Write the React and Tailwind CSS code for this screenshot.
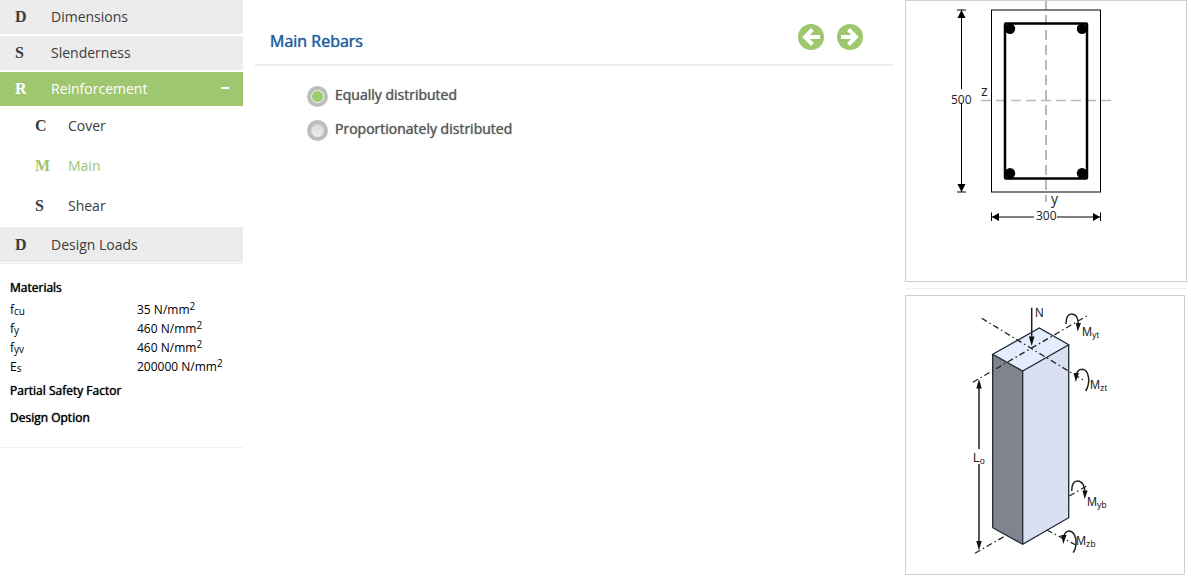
import React, { useState } from "react";

const SubItem = ({ letter, label, active, onClick }) => (
  <a
    href="#"
    onClick={onClick}
    className={`flex h-10 items-center pl-[35px] text-sm ${active ? "text-[#9dc66d]" : "text-[#3c3c3c]"}`}
  >
    <span className="w-[33px] font-['Liberation_Serif',serif] text-base font-bold">{letter}</span>
    {label}
  </a>
);

const NavItem = ({ letter, label, active }) => (
  <a
    href="#"
    className={`flex h-[34px] items-center pr-[14px] pl-[15px] text-sm ${
      active ? "bg-[#9fc76f] text-white" : "bg-[#ececec] text-[#3c3c3c]"
    }`}
  >
    <span className="w-9 font-['Liberation_Serif',serif] text-base font-bold">{letter}</span>
    <span className="flex-1">{label}</span>
    {active && <span className="mb-[2px] h-[2px] w-[8px] bg-white" />}
  </a>
);

const Heading = ({ children }) => (
  <h3 className="h-5 leading-5 [text-shadow:0_0_1px_currentColor]">{children}</h3>
);

const materials = [
  { name: "f", sub: "cu", value: "35" },
  { name: "f", sub: "y", value: "460" },
  { name: "f", sub: "yv", value: "460" },
  { name: "E", sub: "s", value: "200000" },
];

const Sidebar = () => {
  const [current, setCurrent] = useState("Main");
  const subItems = ["Cover", "Main", "Shear"];

  return (
    <aside className="w-[243px] shrink-0">
      <nav className="border-b border-[#ececec] pb-px">
        <div className="flex flex-col gap-[2px]">
          <NavItem letter="D" label="Dimensions" />
          <NavItem letter="S" label="Slenderness" />
          <NavItem letter="R" label="Reinforcement" active />
        </div>
        {subItems.map((item) => (
          <SubItem
            key={item}
            letter={item[0]}
            label={item}
            active={item === current}
            onClick={() => setCurrent(item)}
          />
        ))}
        <div className="mt-px bg-[#ececec] pt-px">
          <NavItem letter="D" label="Design Loads" />
        </div>
      </nav>

      <section className="border-b border-[#efefef] px-[10px] pt-[14px] pb-[19px] text-xs text-black">
        <Heading>Materials</Heading>
        <table className="mt-[2px] mb-[5px] w-full">
          <tbody>
            {materials.map((m) => (
              <tr key={m.name + m.sub} className="h-[19px]">
                <th scope="row" className="w-[127px] p-0 text-left font-normal">
                  {m.name}
                  <sub className="-bottom-px text-[10px]">{m.sub}</sub>
                </th>
                <td className="p-0 whitespace-nowrap">
                  {m.value} N/mm<sup className="-top-1 text-[10px]">2</sup>
                </td>
              </tr>
            ))}
          </tbody>
        </table>
        <div className="flex flex-col gap-[7px]">
          <Heading>Partial Safety Factor</Heading>
          <Heading>Design Option</Heading>
        </div>
      </section>
    </aside>
  );
};

const RoundButton = ({ label, path }) => (
  <button type="button" aria-label={label} className="size-[26px] cursor-pointer">
    <svg viewBox="0 0 26 26" className="size-full">
      <circle cx="13" cy="13" r="13" fill="#9cc76c" />
      <path d={path} fill="none" stroke="#fff" strokeWidth="4" />
    </svg>
  </button>
);

const RadioOption = ({ value, label, checked, onChange }) => (
  <label className="flex h-[34px] cursor-pointer items-center gap-[7px] text-sm text-[#5a5a5a] [text-shadow:0_0_1px_currentColor]">
    <input
      type="radio"
      name="distribution"
      value={value}
      checked={checked}
      onChange={onChange}
      className="mt-[2px] size-[21px] appearance-none rounded-full border-4 border-[#bdbdbd] bg-linear-to-b from-[#d6d6d6] to-[#efefef] checked:bg-[radial-gradient(circle,#9ccb6b_0_5px,#f4f7f0_6px)]"
    />
    {label}
  </label>
);

// Cross section of the column with rebars and dimensions
const SectionDrawing = ({ depth, width }) => (
  <svg width="280" height="280" viewBox="0 0 280 280" className="mx-auto block">
    <g stroke="#b9b9b9" strokeWidth="2" fill="none">
      <path d="M140 0V201" strokeDasharray="10 5" strokeDashoffset="1" />
      <path d="M75 99.5H205" strokeWidth="1.5" strokeDasharray="10 5" />
    </g>
    <rect x="85.5" y="9" width="109" height="182" fill="none" stroke="#000" />
    <rect x="99" y="22.5" width="82" height="155" rx="1" fill="none" stroke="#000" strokeWidth="2.5" />
    <circle cx="104" cy="27.7" r="5.2" />
    <circle cx="176" cy="27.7" r="5.2" />
    <circle cx="104" cy="172.3" r="5.2" />
    <circle cx="176" cy="172.3" r="5.2" />
    <g stroke="#000" fill="none">
      <path d="M55.5 9V88M55.5 102V191M51 9H60M51 191H60" />
      <path d="M85.5 211.5V220M194.5 211.5V220M86 216H128M151 216H194" />
    </g>
    <path d="M55.5 9L59.5 17H51.5ZM55.5 191L59.5 183H51.5ZM86 216L93 212V220ZM194 216L187 212V220Z" />
    <g fontSize="12" fill="#222">
      <text x="45" y="103">{depth}</text>
      <text x="130" y="219">{width}</text>
      <text x="75" y="95" fontSize="14">z</text>
      <text x="145" y="203" fontSize="14">y</text>
    </g>
  </svg>
);

const Moment = ({ x, y, sub }) => (
  <text x={x} y={y}>
    M
    <tspan dy="2" fontSize="9">
      {sub}
    </tspan>
  </text>
);

// 3D column with axial load and end moments
const ColumnDrawing = () => (
  <svg width="278" height="278" viewBox="0 0 278 278" className="mx-auto block">
    <path d="M86.7 58.3L133.3 32L162.7 48.7L116.7 75Z" fill="#e3edfd" />
    <path d="M86.7 58.3L116.7 75V248.3L86.7 231.7Z" fill="#80848f" />
    <path d="M116.7 75L162.7 48.7V221.7L116.7 248.3Z" fill="#d8e0f1" />
    <path
      d="M86.7 58.3L133.3 32L162.7 48.7L116.7 75ZM86.7 58.3V231.7L116.7 248.3L162.7 221.7V48.7M116.7 75V248.3"
      fill="none"
      stroke="#222733"
      strokeWidth="1.3"
    />
    <g fill="none" stroke="#222" strokeWidth="1.3" strokeDasharray="6 3 1.5 3">
      <path d="M75.7 22.3L179 85" />
      <path d="M66.7 86.3L181.3 19.7" />
      <path d="M69 257.3L99 240" />
      <path d="M140.7 234L170 249" />
      <path d="M163.3 200L180.7 190" />
    </g>
    <g fill="none" stroke="#222" strokeWidth="1.5">
      <path d="M125.7 11.7V42M73 90V153M73 168V248" />
      <path d="M160 28C160 21 162 18 165.700 18C170 18 172.3 22 172.3 29" />
      <path d="M170.3 79C171 75.500 173 73.3 176.3 73.3C183 74 185 86 179.7 95" />
      <path d="M165.7 195C165.700 188 168 185 171.7 185C176 185 179 190 179 197" />
      <path d="M157.8 241C158.500 237 160.500 235 163.3 235C170 236 172.500 248 167.3 256.7" />
    </g>
    <g fill="#111">
      <path d="M125.7 50L122.9 40.5H128.5ZM73 83L70.3 92.5H75.7ZM73 254.5L70.3 245H75.7Z" />
      <path d="M171.7 35.5L169.8 27H175ZM169.8 86L167.6 77H173ZM178.7 203L176.5 194.5H181.7ZM157.3 248L155 239H160.5Z" />
    </g>
    <g fontSize="12" fill="#222" fontFamily="'Liberation Sans', sans-serif">
      <text x="129" y="21">N</text>
      <text x="67" y="166">
        L
        <tspan dy="2" fontSize="9">
          o
        </tspan>
      </text>
      <Moment x={176} y={40} sub="yt" />
      <Moment x={184} y={93} sub="zt" />
      <Moment x={181} y={210} sub="yb" />
      <Moment x={170} y={249} sub="zb" />
    </g>
  </svg>
);

const App = () => {
  const [distribution, setDistribution] = useState("equal");

  return (
    <div className="flex bg-white font-['Open_Sans',sans-serif]">
      <Sidebar />

      <main className="min-w-0 flex-1 px-3">
        <header className="flex h-[66px] items-center justify-between border-b-2 border-[#ebebeb] pt-[10px] pr-[30px] pl-[15px]">
          <h1 className="mt-[8px] text-base text-[#235d9f] [text-shadow:0_0_1px_currentColor]">Main Rebars</h1>
          <div className="flex gap-[13px]">
            <RoundButton label="Previous" path="M22 13H7M14.5 5.5L7 13L14.5 20.5" />
            <RoundButton label="Next" path="M4 13H19M11.5 5.5L19 13L11.5 20.5" />
          </div>
        </header>
        <form className="pt-3 pl-[52px]">
          <RadioOption
            value="equal"
            label="Equally distributed"
            checked={distribution === "equal"}
            onChange={() => setDistribution("equal")}
          />
          <RadioOption
            value="proportional"
            label="Proportionately distributed"
            checked={distribution === "proportional"}
            onChange={() => setDistribution("proportional")}
          />
        </form>
      </main>

      <aside className="mr-1 w-[282px] shrink-0">
        <div className="border border-[#cfcfcf]">
          <SectionDrawing depth={500} width={300} />
        </div>
        <hr className="my-[6px] border-[#f1f1f1]" />
        <div className="mr-[2px] border border-[#cfcfcf]">
          <ColumnDrawing />
        </div>
      </aside>
    </div>
  );
};

export default App;
